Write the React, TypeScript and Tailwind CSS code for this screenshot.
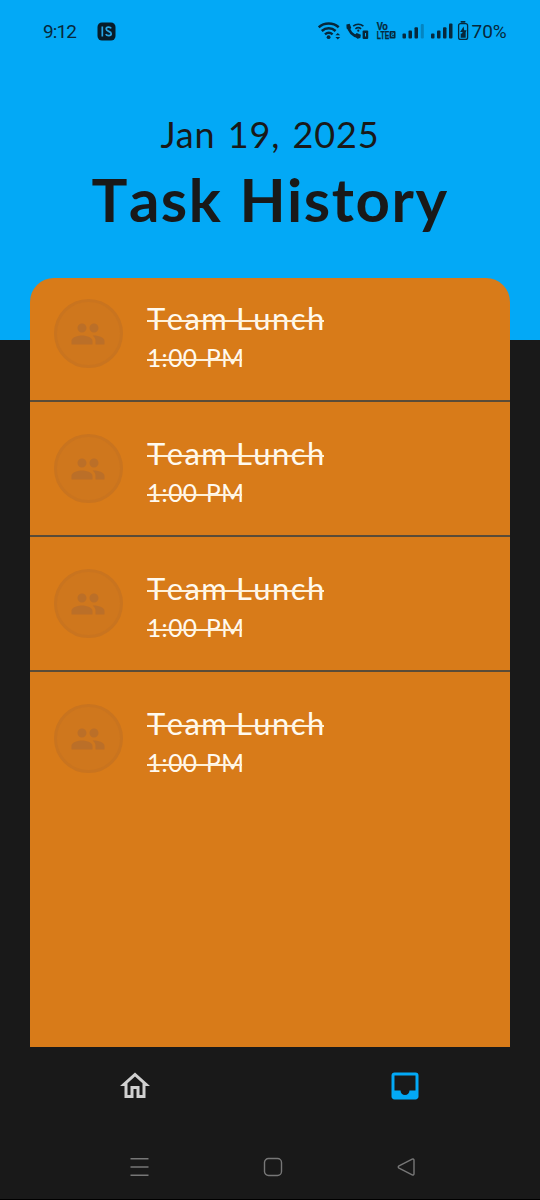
import React from "react";
import { MdInbox, MdOutlineHome, MdPeople } from "react-icons/md";

const tasks = [
  { title: "Team Lunch", time: "1:00 PM" },
  { title: "Team Lunch", time: "1:00 PM" },
  { title: "Team Lunch", time: "1:00 PM" },
  { title: "Team Lunch", time: "1:00 PM" },
];

function StatusIcons() {
  return (
    <svg width="152" height="24" viewBox="318 19 152 24" fill="#07283b" className="shrink-0">
      {/* wifi */}
      <g fill="none" stroke="#07283b" strokeWidth="2.5">
        <path d="M318.7 27.3c5.6-5 14.4-5 20 0" />
        <path d="M321.8 31c4-3.6 9.8-3.6 13.8 0" />
        <path d="M325 34.4c2.3-2 5.3-2 7.6 0" />
      </g>
      <circle cx="328.6" cy="37.2" r="1.9" />
      <path d="M335.4 35.3l2.4-2.4 2.4 2.4zM335.4 37l2.4 2.4 2.4-2.4z" />
      {/* wifi calling */}
      <path d="M348.3 26c.3 5.300 4.300 9.600 10.500 11" fill="none" stroke="#07283b" strokeWidth="2.8" />
      <path d="M346.400 24.500l3.300-.8 1.600 4.300-2.400 2.100-2.300-1.500zM354.500 35.200l2.200-2.200 4.200 1.800-.6 3.300-3 .6z" />
      <g fill="none" stroke="#07283b" strokeWidth="1.6">
        <path d="M353.200 26.200c2.900-2.700 7.300-2.700 10.200 0" />
        <path d="M355.400 28.800c1.700-1.400 4-1.400 5.700 0" />
      </g>
      <circle cx="358.300" cy="30.700" r="1.100" />
      <rect x="362.600" y="30.600" width="5.600" height="8.400" rx="1" />
      <path d="M365 33v3.600h1V33z" fill="#03a9f4" />
      {/* VoLTE */}
      <g fontFamily="Liberation Sans Narrow, Liberation Sans" fontWeight="700" fontSize="10" stroke="#07283b" strokeWidth=".25">
        <text x="376.800" y="30" textLength="11" lengthAdjust="spacingAndGlyphs">Vo</text>
        <text x="376.800" y="38.500" textLength="12.500" lengthAdjust="spacingAndGlyphs">LTE</text>
      </g>
      <rect x="389.500" y="31" width="6" height="7.500" rx="1" />
      <path d="M391 33h2.500v1.600h-2v1.700h2.500" fill="none" stroke="#03a9f4" strokeWidth=".8" />
      {/* signal */}
      <rect x="402.500" y="33.500" width="3.500" height="5" rx="1" />
      <rect x="408.500" y="30.500" width="3.500" height="8" rx="1" />
      <rect x="414.500" y="27.200" width="3.500" height="11.300" rx="1" />
      <rect x="420.800" y="24" width="3" height="14.500" rx="1" opacity=".28" />
      <rect x="431" y="33.500" width="3.500" height="5" rx="1" />
      <rect x="437" y="30.500" width="3.500" height="8" rx="1" />
      <rect x="443" y="27.200" width="3.500" height="11.300" rx="1" />
      <rect x="449" y="23.500" width="3.500" height="15" rx="1" />
      {/* battery */}
      <rect x="460.500" y="21" width="5" height="1.800" rx=".8" />
      <rect x="458.600" y="23.600" width="9" height="15.800" rx="2" fill="none" stroke="#07283b" strokeWidth="1.300" />
      <path d="M463.600 26.500l-3.500 5.600h2.500l-.6 1.400h-1.300v4.200h5v-5.400l.8-2h-2.300z" />
    </svg>
  );
}

function StatusBar() {
  return (
    <div className="flex h-[62px] items-center pr-8 pl-[43px] font-[Roboto,sans-serif] text-[#07283b]">
      <span className="w-[54px] pt-0.5 text-[19px] leading-6 tracking-[-0.9px]">9:12</span>
      <svg width="19" height="19" viewBox="0 0 19 19" className="shrink-0">
        <rect x=".5" y=".5" width="18" height="18" rx="4.500" fill="#071c29" />
        <path d="M5.300 4.500v10M14.200 6.400c-1-1.800-5-1.700-5 .6 0 2.800 5 2 5 4.700 0 2.600-4.400 2.500-5.400.5" fill="none" stroke="#28a5e4" strokeWidth="1.700" />
      </svg>
      <div className="ml-auto flex items-center">
        <StatusIcons />
        <span className="w-[38px] pt-0.5 pl-[1.5px] text-[19px] leading-6 whitespace-nowrap">70%</span>
      </div>
    </div>
  );
}

function TaskRow({ title, time }: { title: string; time: string }) {
  return (
    <li className="flex h-[135px] gap-6 border-b-2 border-[#594b38] pt-8 pl-6 first:h-[124px] first:pt-[21px] last:border-b-0">
      <div className="flex size-[69px] shrink-0 items-center justify-center rounded-full border-[3px] border-[#c9741f] bg-[#cf771d] pr-px text-[#bb6f28]">
        <MdPeople size={36} />
      </div>
      <div className="flex flex-col items-start whitespace-nowrap text-[#fffaf0]">
        <span className="relative h-[39px] text-[31px] leading-[39px] tracking-[1.4px] [word-spacing:-1.5px] [font-kerning:none]">
          {title}
          <span className="absolute top-[21px] left-0 h-[1.5px] w-[177px] bg-[#fff0d8]" />
        </span>
        <span className="relative h-[39px] text-[24.5px] leading-[39px] tracking-[0.4px] [word-spacing:2px]">
          {time}
          <span className="absolute top-[21px] left-0 h-[1.5px] w-[95px] bg-[#fff0d8]" />
        </span>
      </div>
    </li>
  );
}

export default function App() {
  return (
    <div className="flex h-[1200px] w-[540px] flex-col overflow-hidden bg-[#191919] font-[Lato,sans-serif]">
      <header className="h-[340px] shrink-0 bg-[#03a9f6]">
        <StatusBar />
        <div className="flex flex-col items-center pt-[46px] whitespace-nowrap text-[#191919]">
          <p className="text-[36px] leading-[52px] tracking-[0.9px] [word-spacing:2px]">Jan 19, 2025</p>
          <h1 className="text-[60px] leading-[78px] font-bold tracking-[1.5px] [word-spacing:1px] [font-kerning:none]">Task History</h1>
        </div>
      </header>
      <main className="z-10 mx-[30px] -mt-[62px] h-[769px] shrink-0 rounded-t-[24px] bg-[#d87b19]">
        <ul>
          {tasks.map((task, index) => (
            <TaskRow key={index} {...task} />
          ))}
        </ul>
      </main>
      <nav className="grid h-[78px] shrink-0 grid-cols-2 place-items-center">
        <button aria-label="Home" className="text-[#d0d0d0]"><MdOutlineHome size={36} /></button>
        <button aria-label="History" className="text-[#03a9f6]"><MdInbox size={36} /></button>
      </nav>
      <div className="flex h-[75px] shrink-0 items-center justify-between border-b border-black pt-[10px] pr-[124px] pl-[129px]">
        <svg width="21" height="20" viewBox="0 0 21 20" fill="none" stroke="#777" strokeWidth="1.400">
          <path d="M1.500 1.800h18M1.500 10h18M1.500 18.200h18" />
        </svg>
        <svg width="20" height="20" viewBox="0 0 20 20" fill="none" stroke="#777" strokeWidth="1.400">
          <rect x="1.500" y="1.500" width="17" height="17" rx="4" />
        </svg>
        <svg width="20" height="20" viewBox="0 0 20 20" fill="none" stroke="#777" strokeWidth="1.400" strokeLinejoin="round">
          <path d="M16.200 2.100L3 8.900c-1 .6-1 1.600 0 2.200l13.200 6.800c1 .4 1.800 0 1.800-1.200V3.300c0-1.100-.8-1.600-1.800-1.200z" />
        </svg>
      </div>
    </div>
  );
}
